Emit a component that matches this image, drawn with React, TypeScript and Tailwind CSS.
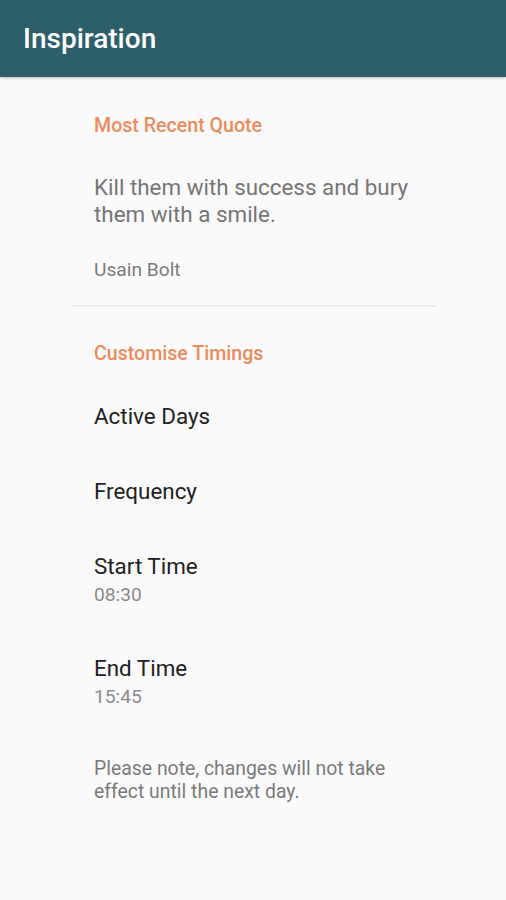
export default function App() {
  const rows = [
    { title: "Active Days" },
    { title: "Frequency" },
    { title: "Start Time", value: "08:30" },
    { title: "End Time", value: "15:45" },
  ];

  return (
    <div className="min-h-[900px] bg-[#fafafa] font-['Roboto',sans-serif]">
      {/* Toolbar */}
      <div className="h-[77px] bg-[#2d5f6b] flex items-center px-[23px] shadow-[0_1px_3px_rgba(0,0,0,0.25)]">
        <h1 className="text-white text-[28px] font-medium">Inspiration</h1>
      </div>

      {/* Most recent quote */}
      <div className="pl-[94px] pr-[80px] pt-[36px]">
        <h2 className="text-[#ec8b5e] text-[19.6px] font-medium leading-[26px]">Most Recent Quote</h2>
        <p className="mt-[35px] text-[#757575] text-[22.4px] leading-[27px]">
          Kill them with success and bury them with a smile.
        </p>
        <p className="mt-[30px] text-[#7a7a7a] text-[19.2px] leading-[24px]">Usain Bolt</p>
      </div>

      <div className="mx-[71px] w-[365px] mt-[23px] h-[2px] bg-[#ececec]" />

      {/* Customise timings */}
      <div className="px-[94px] pt-[34px]">
        <h2 className="text-[#ec8b5e] text-[19.6px] font-medium leading-[26px]">Customise Timings</h2>
        <div className="mt-[35px] flex flex-col gap-[47px]">
          {rows.map((r) => (
            <div key={r.title}>
              <div className="text-[#212121] text-[22.4px] leading-[28px]">{r.title}</div>
              {r.value && <div className="text-[#8a8a8a] text-[19.2px] leading-[24px] mt-[3px]">{r.value}</div>}
            </div>
          ))}
        </div>
        <p className="mt-[48px] text-[#7a7a7a] text-[19.4px] leading-[23px] w-[320px]">
          Please note, changes will not take effect until the next day.
        </p>
      </div>
    </div>
  );
}
